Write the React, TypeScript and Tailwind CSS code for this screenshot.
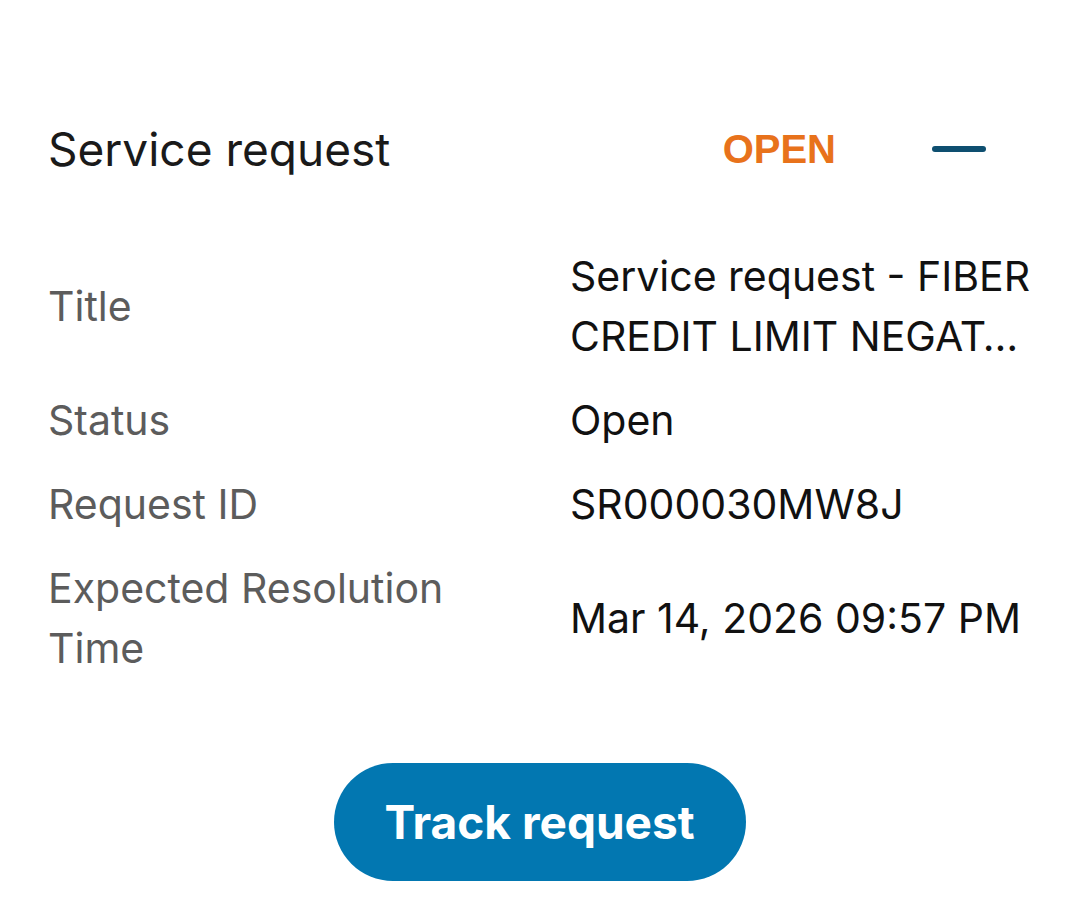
import React from "react";

const rows: { label: string; value: string }[] = [
  { label: "Title", value: "Service request - FIBER CREDIT LIMIT NEGAT…" },
  { label: "Status", value: "Open" },
  { label: "Request ID", value: "SR000030MW8J" },
  { label: "Expected Resolution Time", value: "Mar 14, 2026 09:57 PM" },
];

export default function App() {
  return (
    <div className="w-[1079px] h-[918px] bg-white px-[48px] pt-[119px] font-['Inter','Liberation_Sans',sans-serif] overflow-hidden">
      <div className="flex h-[60px] items-center">
        <h2 className="flex-1 text-[46px] leading-[60px] font-normal text-[#1a1a1a]">
          Service request
        </h2>
        <span className="text-[40px] leading-[60px] font-bold text-[#e8721b] font-['Liberation_Sans',sans-serif]">
          OPEN
        </span>
        <button
          aria-label="Collapse"
          className="ml-[96px] mr-[45px] flex h-[60px] w-[54px] items-center justify-center"
        >
          <span className="block h-[6px] w-[54px] rounded-full bg-[#0e4f70]" />
        </button>
      </div>

      <dl className="mt-[67px] grid grid-cols-2 items-center gap-x-[61px] gap-y-[24px]">
        {rows.map((r) => (
          <React.Fragment key={r.label}>
            <dt className="text-[41px] leading-[60px] text-[#5c5c5c]">{r.label}</dt>
            <dd className="line-clamp-2 text-[41px] leading-[60px] text-[#111111]">{r.value}</dd>
          </React.Fragment>
        ))}
      </dl>

      <div className="mt-[85px] flex justify-center">
        <button className="flex h-[118px] w-[412px] items-center justify-center rounded-full bg-[#0277b1] text-[46px] font-bold text-white">
          Track request
        </button>
      </div>
    </div>
  );
}
